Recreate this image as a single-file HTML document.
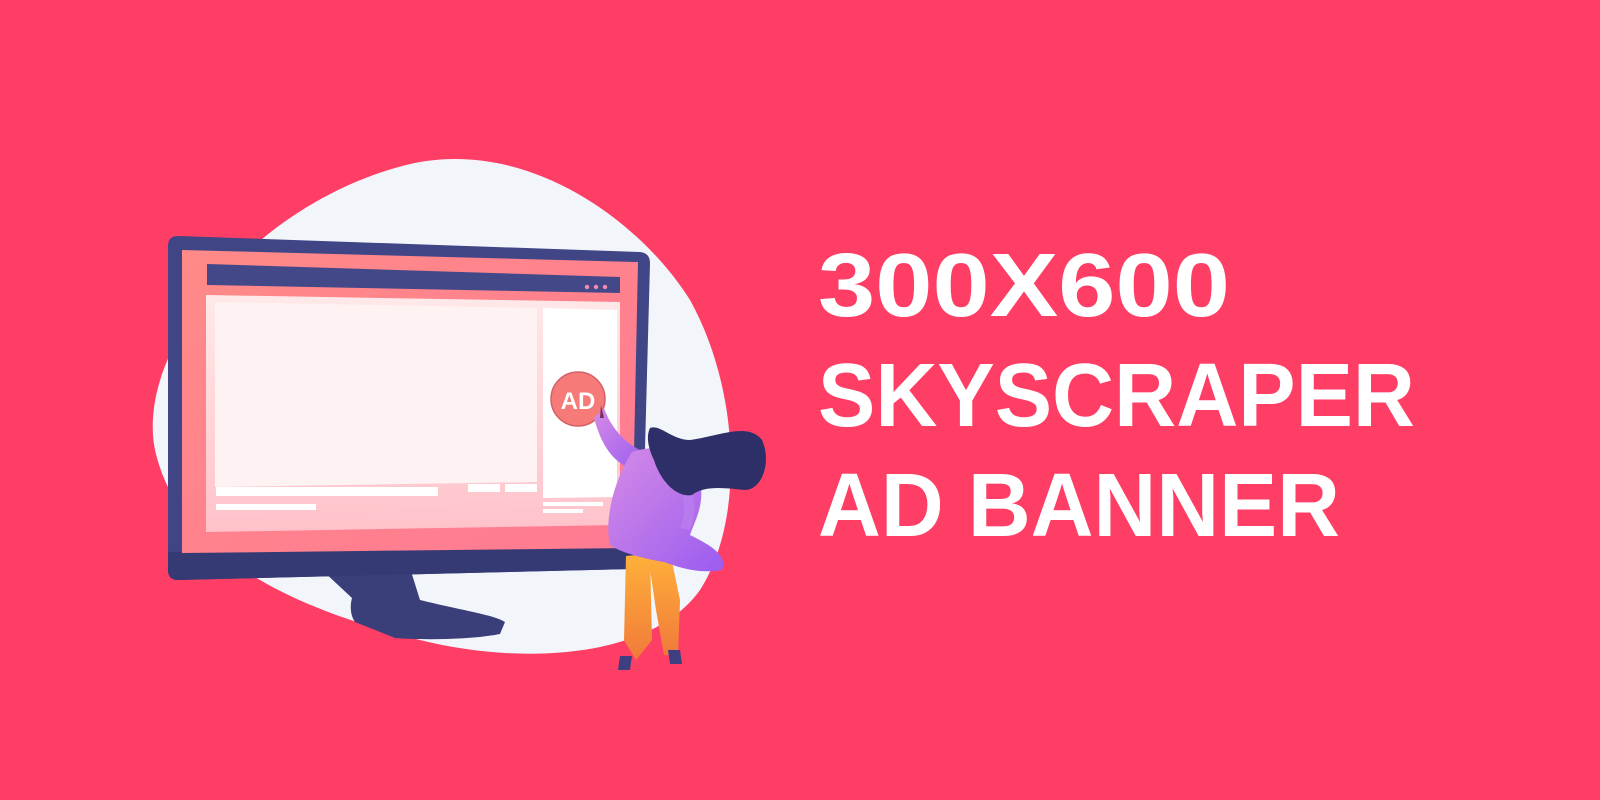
<!DOCTYPE html>
<html><head><meta charset="utf-8"><style>
html,body{margin:0;padding:0;width:1600px;height:800px;overflow:hidden;background:#FF3E66}
svg{display:block}
</style></head><body>
<svg width="1600" height="800" viewBox="0 0 1600 800" xmlns="http://www.w3.org/2000/svg">
<defs>
<linearGradient id="scr" x1="0" y1="0" x2="1" y2="1"><stop offset="0" stop-color="#FF8A88"/><stop offset="1" stop-color="#FF7A92"/></linearGradient>
<linearGradient id="cnt" x1="0" y1="0" x2="0" y2="1"><stop offset="0" stop-color="#FFF4F4"/><stop offset="1" stop-color="#FFC9D0"/></linearGradient>
<linearGradient id="pur" x1="0" y1="0" x2="1" y2="1"><stop offset="0" stop-color="#D58BE6"/><stop offset="1" stop-color="#9B5CF0"/></linearGradient>
<linearGradient id="leg" x1="0" y1="0" x2="0" y2="1"><stop offset="0" stop-color="#FFB13A"/><stop offset="1" stop-color="#F07A3A"/></linearGradient>
</defs>
<rect width="1600" height="800" fill="#FF3E66"/>
<path d="M395,168 C520,130 640,220 690,300 C740,390 745,520 700,590 C650,660 520,665 420,640 C300,610 180,560 155,450 C135,350 250,210 395,168 Z" fill="#F2F6FA"/>
<path d="M322,570 L410,568 L420,600 C460,610 495,615 505,622 L500,634 C470,640 420,640 395,638 L355,622 C350,615 350,605 352,598 Z" fill="#3A3F79"/>
<path d="M178,236 L640,252 Q650,253 650,263 L642,560 Q642,568 632,569 L178,580 Q168,580 168,570 L168,246 Q168,236 178,236 Z" fill="#3F4585"/>
<path d="M168,552 L642,546 L642,560 Q642,568 632,569 L178,580 Q168,580 168,570 Z" fill="#363A74"/>
<path d="M182,250 L638,262 L632,548 L182,553 Z" fill="url(#scr)"/>
<path d="M207,264 L620,277 L620,293 L207,285 Z" fill="#434888"/>
<circle cx="587" cy="287" r="2.2" fill="#F58AB0"/><circle cx="596" cy="287" r="2.2" fill="#F58AB0"/><circle cx="605" cy="287" r="2.2" fill="#F58AB0"/>
<path d="M206,295 L620,302 L620,525 L206,532 Z" fill="url(#cnt)" opacity="0.9"/>
<path d="M215,302 L537,308 L537,482 L215,487 Z" fill="#FFF2F3"/>
<path d="M543,308 L617,310 L617,497 L543,498 Z" fill="#FFFFFF"/>
<rect x="216" y="487" width="222" height="9" fill="#FFFFFF"/>
<rect x="216" y="504" width="100" height="6" fill="#FFFFFF"/>
<rect x="468" y="484" width="32" height="8" fill="#FFFFFF"/>
<rect x="505" y="484" width="32" height="8" fill="#FFFFFF"/>
<rect x="543" y="502" width="60" height="4" fill="#FFFFFF"/>
<rect x="543" y="509" width="40" height="4" fill="#FFFFFF"/>
<circle cx="578" cy="399" r="27" fill="#F57A78" stroke="#D4606A" stroke-width="1.5"/>
<text x="578" y="409" text-anchor="middle" font-family="Liberation Sans, sans-serif" font-weight="bold" font-size="24" fill="#FFFFFF">AD</text>
<!-- woman -->
<path d="M626,556 L650,554 L652,640 L636,660 L624,640 Z" fill="url(#leg)"/>
<path d="M648,556 L670,552 L680,600 L678,655 L664,655 L656,610 Z" fill="url(#leg)"/>
<path d="M620,656 L632,656 L630,670 L618,670 Z" fill="#3D3F80"/>
<path d="M668,650 L680,650 L682,664 L670,664 Z" fill="#3D3F80"/>
<path d="M594,418 C600,440 610,462 634,470 L644,452 C622,442 610,425 604,408 Z" fill="url(#pur)"/>
<path d="M632,452 C660,442 690,452 700,480 C705,505 695,520 690,535 C710,545 728,555 722,570 C700,574 680,568 664,562 C640,558 620,552 610,545 C604,520 614,480 632,452 Z" fill="url(#pur)"/>
<path d="M678,468 C695,490 698,510 690,530 L680,528 C688,508 684,490 672,475 Z" fill="#B97AEE"/>
<path d="M650,428 C660,424 672,440 690,440 C720,436 748,422 762,440 C772,462 762,490 745,490 C725,488 705,485 692,495 C676,498 660,480 654,460 C648,448 646,436 650,428 Z" fill="#2E2F68"/>
<path d="M601,405 L604,418 L600,418 Z" fill="#7A2E5A"/>
<g font-family="Liberation Sans, sans-serif" font-weight="bold" fill="#FFFFFF" font-size="90">
<text x="818" y="316" textLength="412" lengthAdjust="spacingAndGlyphs">300X600</text>
<text x="818" y="426" textLength="597" lengthAdjust="spacingAndGlyphs">SKYSCRAPER</text>
<text x="818" y="536" textLength="522" lengthAdjust="spacingAndGlyphs">AD BANNER</text>
</g>
</svg>
</body></html>
